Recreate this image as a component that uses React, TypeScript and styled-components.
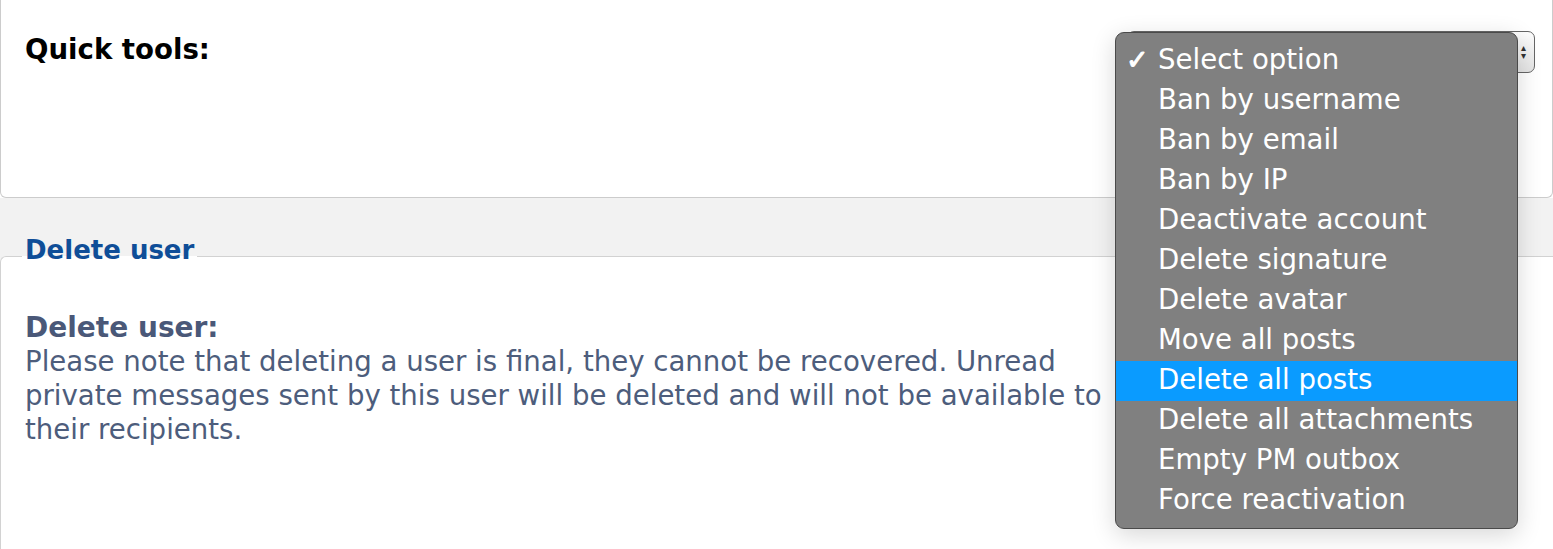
import React from "react";
import styled, { createGlobalStyle } from "styled-components";

const GlobalStyle = createGlobalStyle`
  html, body {
    margin: 0;
    padding: 0;
    background: #ffffff;
    font-family: "DejaVu Sans", Verdana, sans-serif;
  }
`;

const Page = styled.div`
  position: relative;
  width: 1553px;
  height: 549px;
  overflow: hidden;
`;

const TopPanel = styled.div`
  height: 198px;
  box-sizing: border-box;
  border: 1px solid #cccccc;
  border-top: none;
  border-radius: 0 0 6px 6px;
  display: flex;
  justify-content: space-between;
  align-items: flex-start;
  padding: 31px 17px 0 24px;
`;

const ToolsLabel = styled.div`
  font-weight: bold;
  font-size: 27.6px;
  color: #000;
  line-height: 38px;
`;

const FakeSelect = styled.div`
  width: 408px;
  height: 42px;
  box-sizing: border-box;
  border: 1px solid #666;
  border-radius: 7px;
  background: linear-gradient(#fdfdfd, #e4e4e4);
  display: flex;
  justify-content: flex-end;
  align-items: center;
  padding-right: 8px;
  font-size: 10px;
  color: #333;
  line-height: 8px;
`;

const Arrows = styled.div`
  display: flex;
  flex-direction: column;
  align-items: center;
`;

const GrayBand = styled.div`
  background: #f2f2f2;
  padding-top: 38px;
`;

const Fieldset = styled.fieldset`
  margin: 0;
  background: #ffffff;
  border: 1px solid #d2d2d2;
  border-right: none;
  border-bottom: none;
  border-radius: 6px 0 0 0;
  padding: 35px 0 60px 21px;
  min-height: 260px;
`;

const Legend = styled.legend`
  padding: 0 3px 12px;
  font-weight: bold;
  font-size: 26px;
  color: #0f4e98;
  line-height: 28px;
`;

const FieldLabel = styled.div`
  font-weight: bold;
  font-size: 28px;
  color: #4a5878;
  line-height: 34px;
  padding-left: 3px;
`;

const FieldText = styled.div`
  font-size: 27.6px;
  color: #4d5d7c;
  line-height: 34px;
  max-width: 1125px;
  padding-left: 3px;
`;

const Menu = styled.div`
  position: absolute;
  left: 1115px;
  top: 32px;
  width: 403px;
  height: 497px;
  box-sizing: border-box;
  background: #808080;
  border: 1px solid #4a4a4a;
  border-radius: 9px;
  box-shadow: 0 6px 24px rgba(0, 0, 0, 0.16);
  padding: 8px 0;
`;

const Item = styled.div<{ $active?: boolean }>`
  position: relative;
  height: 40px;
  box-sizing: border-box;
  display: flex;
  align-items: center;
  padding: 0 0 3px 42px;
  font-size: 27.6px;
  color: #ffffff;
  background: ${(p) => (p.$active ? "#0a9bff" : "transparent")};
`;

const Check = styled.span`
  position: absolute;
  left: 10px;
  font-size: 27px;
  font-weight: bold;
  -webkit-text-stroke: 1px #ffffff;
`;

const options = [
  "Select option",
  "Ban by username",
  "Ban by email",
  "Ban by IP",
  "Deactivate account",
  "Delete signature",
  "Delete avatar",
  "Move all posts",
  "Delete all posts",
  "Delete all attachments",
  "Empty PM outbox",
  "Force reactivation",
];

export default function App() {
  return (
    <Page>
      <GlobalStyle />
      <TopPanel>
        <ToolsLabel>Quick tools:</ToolsLabel>
        <FakeSelect>
          <Arrows>
            <span>▴</span>
            <span>▾</span>
          </Arrows>
        </FakeSelect>
      </TopPanel>
      <GrayBand>
        <Fieldset>
          <Legend>Delete user</Legend>
          <FieldLabel>Delete user:</FieldLabel>
          <FieldText>
            Please note that deleting a user is final, they cannot be recovered. Unread private
            messages sent by this user will be deleted and will not be available to their
            recipients.
          </FieldText>
        </Fieldset>
      </GrayBand>
      <Menu>
        {options.map((o, i) => (
          <Item key={o} $active={i === 8}>
            {i === 0 && <Check>✓</Check>}
            {o}
          </Item>
        ))}
      </Menu>
    </Page>
  );
}
